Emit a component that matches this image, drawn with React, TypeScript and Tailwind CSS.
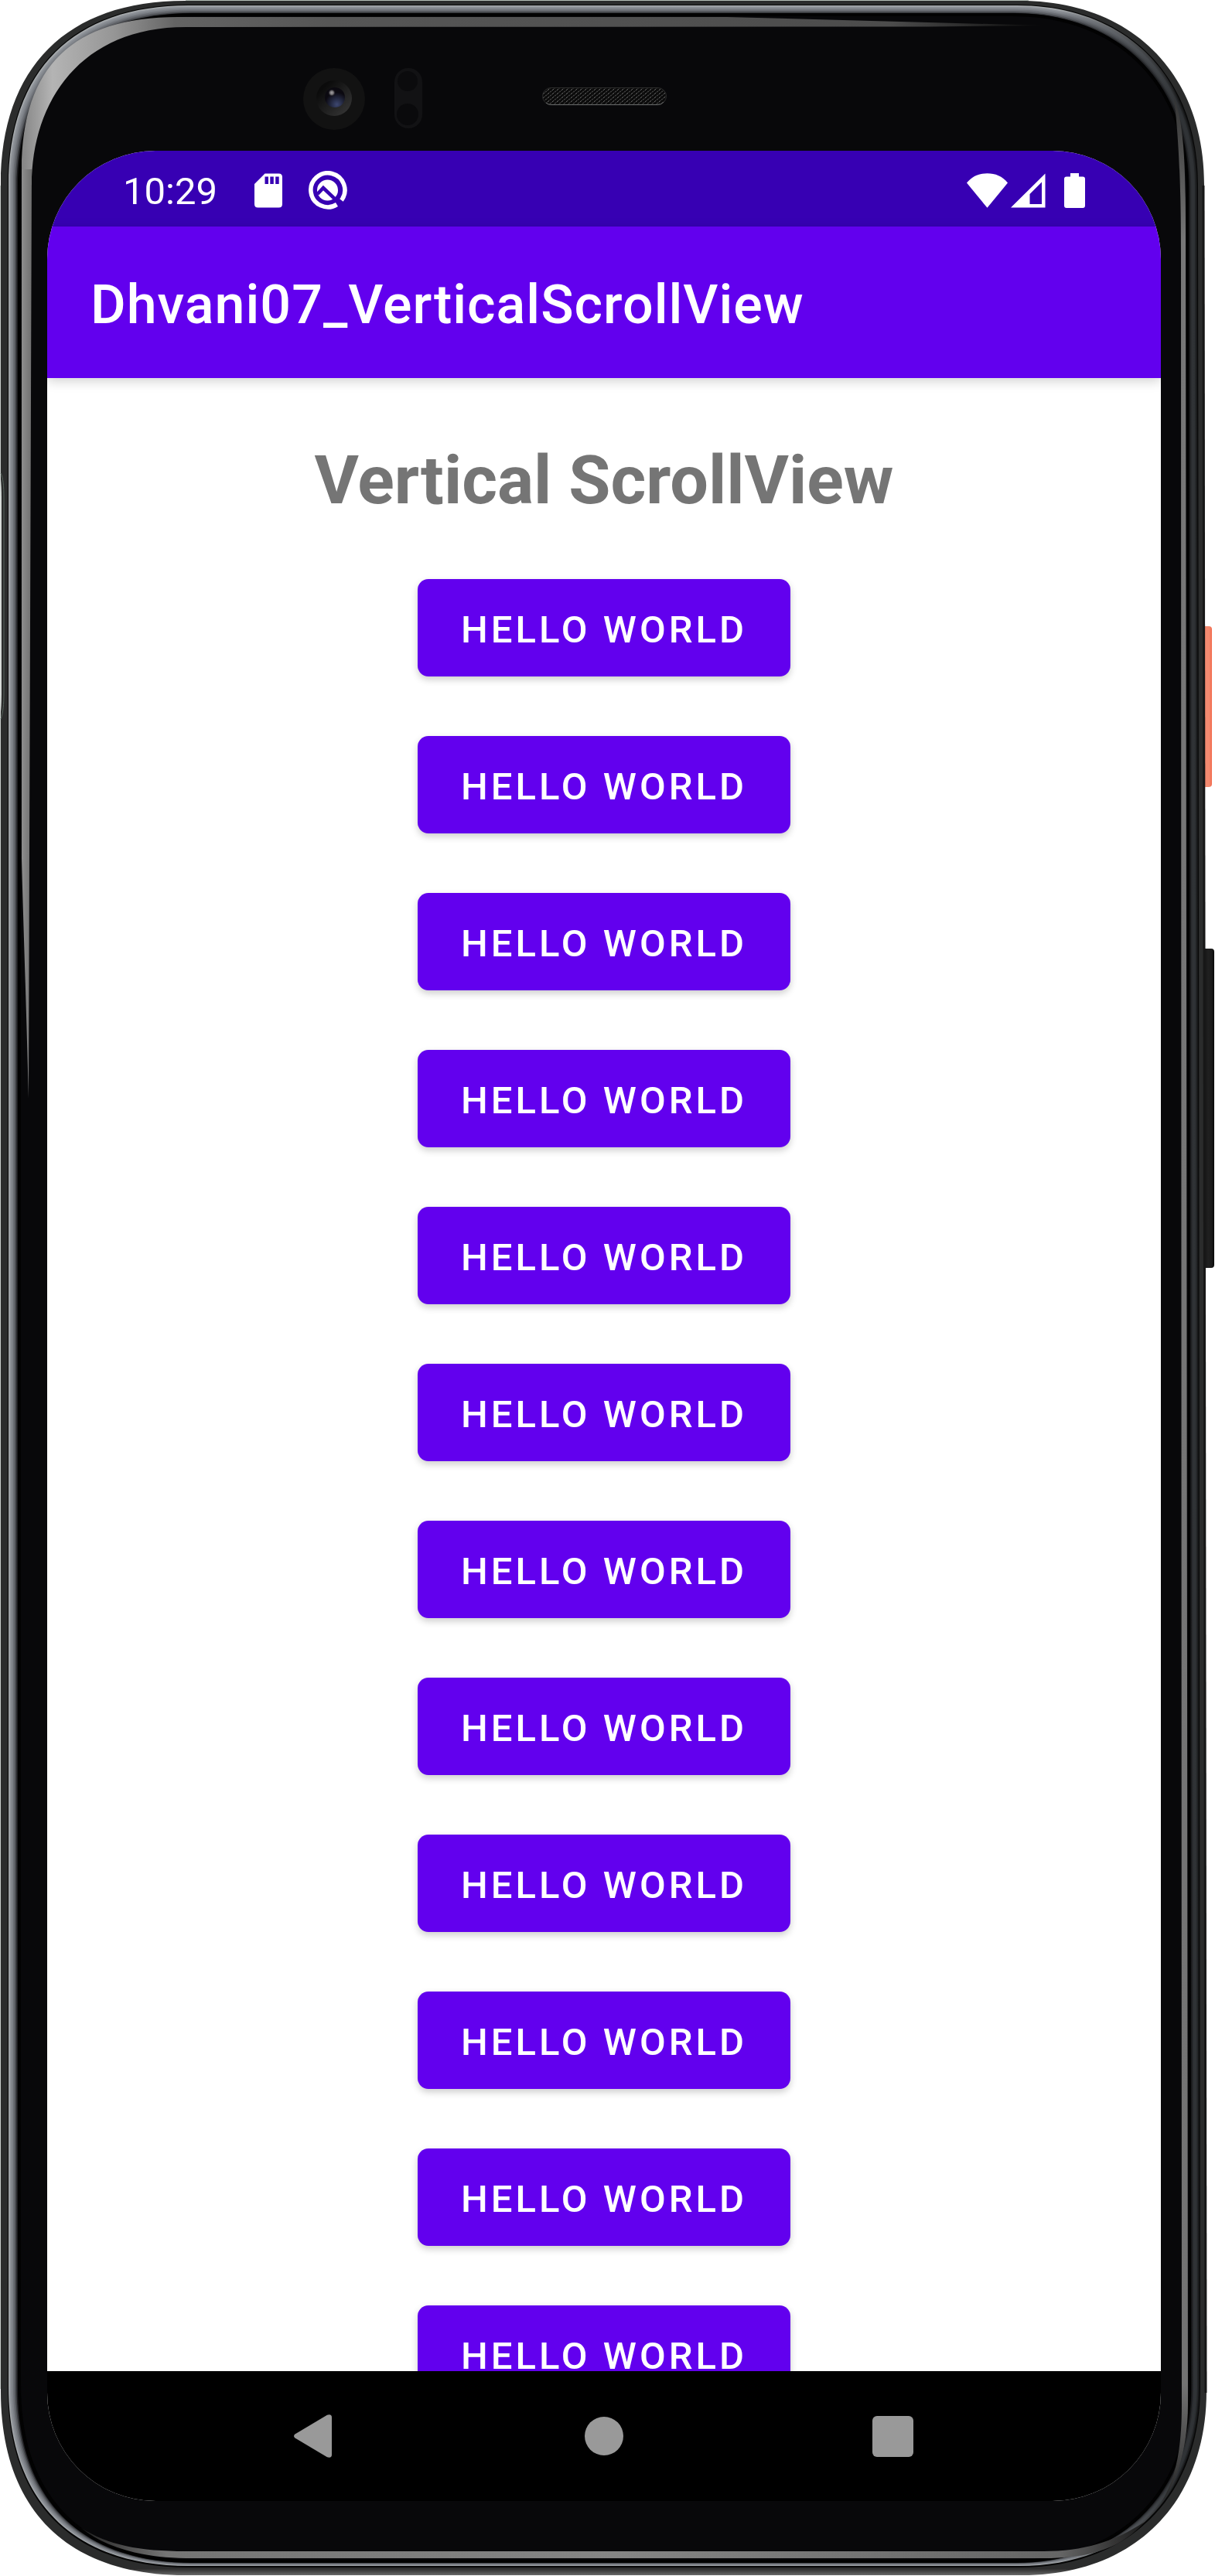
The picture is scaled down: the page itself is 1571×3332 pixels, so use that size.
import React from "react";

type Insets = { l: number; t: number; r: number; b: number };

// Outline of the phone body, shrunk by a different amount on each side.
function bodyPath({ l, t, r, b }: Insets): string {
  const x0 = 1 + l;
  const y0 = 1 + t;
  const x1 = 1557 - r;
  const x2 = 1560 - r;
  const y1 = 3331 - b;
  const R = 238 - Math.max(l, t) * 0.5;
  const h = R * 0.36;
  return [
    `M${x0} ${y0 + R}`,
    `C${x0} ${y0 + h} ${x0 + h} ${y0} ${x0 + R} ${y0}`,
    `L${x1 - R} ${y0}`,
    `C${x1 - h - 8} ${y0} ${x1} ${y0 + h + 8} ${x1} ${y0 + R}`,
    `L${x2} ${y1 - R}`,
    `C${x2} ${y1 - h - 8} ${x2 - h - 8} ${y1} ${x2 - R} ${y1}`,
    `L${x0 + R} ${y1}`,
    `C${x0 + h} ${y1} ${x0} ${y1 - h} ${x0} ${y1 - R}`,
    "Z",
  ].join(" ");
}

// Metal rim, from its bright outer line to its dark inner line.
const RIM: { left: string; right: string }[] = [
  { left: "#a3a7aa", right: "#161718" },
  { left: "#90949a", right: "#232527" },
  { left: "#868a90", right: "#2e3134" },
  { left: "#7b7f85", right: "#303336" },
  { left: "#6c6f75", right: "#303336" },
  { left: "#5a5d62", right: "#292b2e" },
  { left: "#3f4145", right: "#1a1b1d" },
  { left: "#1c1c1f", right: "#0c0c0e" },
];

function PhoneBody() {
  return (
    <svg
      className="absolute inset-0 h-full w-full"
      viewBox="0 0 1571 3332"
      preserveAspectRatio="none"
      aria-hidden="true"
    >
      <defs>
        <linearGradient id="outer" gradientUnits="userSpaceOnUse" x1="0" y1="3319" x2="0" y2="3331">
          <stop offset="0" stopColor="#2b2c2c" />
          <stop offset="0.3" stopColor="#2c2c2c" />
          <stop offset="1" stopColor="#6a6a6a" />
        </linearGradient>
        {RIM.map((c, i) => (
          <linearGradient key={i} id={`rim${i}`} gradientUnits="userSpaceOnUse" x1="0" y1="0" x2="1557" y2="0">
            <stop offset="0.88" stopColor={c.left} />
            <stop offset="0.98" stopColor={c.right} />
          </linearGradient>
        ))}
        <linearGradient id="shineLeft" gradientUnits="userSpaceOnUse" x1="28" y1="0" x2="41" y2="0">
          <stop offset="0" stopColor="#8e8e8e" />
          <stop offset="1" stopColor="#6f6f6f" />
        </linearGradient>
        <linearGradient id="shineTop" gradientUnits="userSpaceOnUse" x1="28" y1="0" x2="1350" y2="0">
          <stop offset="0" stopColor="#858585" />
          <stop offset="0.03" stopColor="#b4b4b4" />
          <stop offset="0.09" stopColor="#969696" />
          <stop offset="0.15" stopColor="#646464" />
          <stop offset="0.3" stopColor="#565656" />
          <stop offset="0.85" stopColor="#4c4c4c" />
          <stop offset="1" stopColor="#0a0a0a" />
        </linearGradient>
        <linearGradient id="shineRight" gradientUnits="userSpaceOnUse" x1="0" y1="125" x2="0" y2="3240">
          <stop offset="0" stopColor="#333333" />
          <stop offset="0.06" stopColor="#777777" />
          <stop offset="0.95" stopColor="#737373" />
          <stop offset="1" stopColor="#222222" />
        </linearGradient>
        <linearGradient id="shineBottom" gradientUnits="userSpaceOnUse" x1="105" y1="0" x2="1480" y2="0">
          <stop offset="0" stopColor="#222222" />
          <stop offset="0.08" stopColor="#757575" />
          <stop offset="0.5" stopColor="#858585" />
          <stop offset="0.92" stopColor="#666666" />
          <stop offset="1" stopColor="#1a1a1a" />
        </linearGradient>
        <linearGradient id="power" x1="0" y1="0" x2="1" y2="0">
          <stop offset="0" stopColor="#d9644a" />
          <stop offset="0.3" stopColor="#f48a70" />
          <stop offset="0.75" stopColor="#f48a70" />
          <stop offset="1" stopColor="#f2694b" />
        </linearGradient>
        <linearGradient id="volume" x1="0" y1="0" x2="1" y2="0">
          <stop offset="0" stopColor="#0c0c0c" />
          <stop offset="0.5" stopColor="#202020" />
          <stop offset="0.8" stopColor="#1a1a1a" />
          <stop offset="1" stopColor="#060606" />
        </linearGradient>
        <linearGradient id="cameraRing" x1="0" y1="0" x2="1" y2="1">
          <stop offset="0.2" stopColor="#0b0b0b" />
          <stop offset="1" stopColor="#3a3a3a" />
        </linearGradient>
        <radialGradient id="cameraLens" cx="0.6" cy="0.85" r="0.6">
          <stop offset="0" stopColor="#3e4870" />
          <stop offset="0.5" stopColor="#232840" />
          <stop offset="1" stopColor="#0b0910" />
        </radialGradient>
        <radialGradient id="cameraGlint">
          <stop offset="0" stopColor="#a8a6a8" />
          <stop offset="0.5" stopColor="#6b696c" />
          <stop offset="1" stopColor="#0b0910" stopOpacity="0" />
        </radialGradient>
        <pattern id="mesh" width="6" height="5" patternUnits="userSpaceOnUse">
          <rect width="6" height="5" fill="#0c0c0c" />
          <path d="M0 2L2 0M3 4.500L5 2.500" stroke="#6c6c6c" strokeWidth="1" />
        </pattern>
      </defs>

      <rect x="1553" y="810" width="14" height="208" rx="4" fill="url(#power)" />
      <rect x="1554" y="1227" width="16" height="413" rx="4" fill="url(#volume)" />

      <path d={bodyPath({ l: 0, t: 0, r: 0, b: 0 })} fill="url(#outer)" />
      <path d="M240 0.500H1330" stroke="#b6c0b8" />
      <path d="M0.500 240V3090" stroke="#c9cecb" />
      <path d="M0 612C1 618 2 628 2 645V895C2 912 1 922 0 930Z" fill="#d5dad7" />
      <path d="M1 612C4 618 5 628 5 645V895C5 912 4 922 1 930" fill="none" stroke="#56635c" strokeWidth="1" />
      <path d="M1556 240L1559 3095" stroke="#171717" strokeWidth="3" />
      <path d={bodyPath({ l: 9, t: 5, r: 8, b: 10 })} fill="#060606" />
      {RIM.map((_, i) => (
        <path
          key={i}
          d={bodyPath({ l: 10 + i * 1.5, t: 6 + i * 1.4, r: 9 + i * 1.5, b: 12 + i * 0.6 })}
          fill={`url(#rim${i})`}
        />
      ))}
      <path d={bodyPath({ l: 22, t: 16, r: 20, b: 16 })} fill="#020202" />
      <path d={bodyPath({ l: 26, t: 20, r: 23, b: 20 })} fill="#08080a" />

      <path
        d="M28 220C28 85 95 22 230 22H940L1200 29L1350 33L1200 34.500L240 35C105 35 41 130 41 240Z"
        fill="url(#shineTop)"
      />
      <path d="M28 219H41L38 1100L37 1420C34 1300 30 1190 28 1110Z" fill="url(#shineLeft)" />
      <path
        d="M1518 125C1530 160 1533 200 1533 300L1536 3110C1536 3165 1522 3210 1502 3237C1520 3205 1528 3170 1528 3110L1527 330C1527 230 1524 180 1518 125Z"
        fill="url(#shineRight)"
      />
      <path
        d="M105 3270C140 3292 180 3300 240 3300H1350C1400 3300 1440 3288 1480 3262C1450 3296 1410 3309 1350 3309H240C180 3308 135 3294 105 3270Z"
        fill="url(#shineBottom)"
      />

      <circle cx="432" cy="128" r="40" fill="#121212" />
      <circle cx="432" cy="127" r="23" fill="url(#cameraRing)" />
      <circle cx="433" cy="126" r="13" fill="url(#cameraLens)" />
      <circle cx="429" cy="120" r="5" fill="url(#cameraGlint)" />

      <rect x="510" y="88" width="36" height="78" rx="18" fill="#121214" />
      <circle cx="527" cy="105" r="13" fill="#0b0b0d" />
      <circle cx="527" cy="148" r="14" fill="#0a0a0c" />

      <rect x="701.500" y="113.500" width="160" height="22" rx="11" fill="url(#mesh)" stroke="#2a2a2a" />
      <path d="M706 133Q709 135.500 713 135.500H850Q855 135.500 858 132" fill="none" stroke="#6a6c6c" />
    </svg>
  );
}

function SdCardIcon() {
  return (
    <svg className="h-[45px] w-9" viewBox="0 0 36 45" fill="#ffffff" role="img" aria-label="SD card">
      <path
        fillRule="evenodd"
        d="M13.500 0.500H31.500Q36 0.500 36 5V40Q36 44.500 31.500 44.500H4.500Q0 44.500 0 40V14Z M13.500 4.500V14H18V4.500Z M20.300 4.500V14H24.800V4.500Z M27.200 4.500V14H31.700V4.500Z"
      />
    </svg>
  );
}

function AndroidQIcon() {
  return (
    <svg className="h-[50px] w-[50px]" viewBox="0 0 50 50" role="img" aria-label="Android">
      <circle cx="24.500" cy="25" r="13.500" fill="#ffffff" />
      <path d="M11.500 30L19 22L41 43" fill="none" stroke="#3700b3" strokeWidth="4.600" />
      <path d="M42.500 38A22 22 0 1 0 36.500 43.500" fill="none" stroke="#ffffff" strokeWidth="5.600" />
    </svg>
  );
}

function WifiIcon() {
  return (
    <svg className="h-[45px] w-[53px]" viewBox="0 0 53 45" fill="#ffffff" role="img" aria-label="Wi-Fi">
      <path d="M0 12.500C7 4 16 0.300 26.500 0.300S46 4 53 12.500L26.500 44.800Z" />
    </svg>
  );
}

function SignalIcon() {
  return (
    <svg className="h-[45px] w-[45px]" viewBox="0 0 45 45" fill="#ffffff" role="img" aria-label="Mobile signal">
      <path fillRule="evenodd" d="M44.500 0.500V44.500H0ZM40 11.500L24.500 27V40H40Z" />
    </svg>
  );
}

function BatteryIcon() {
  return (
    <svg className="h-[45px] w-[27px]" viewBox="0 0 27 45" fill="#ffffff" role="img" aria-label="Battery full">
      <path d="M8 0H19V4.500H24Q27 4.500 27 7.500V42Q27 45 24 45H3Q0 45 0 42V7.500Q0 4.500 3 4.500H8Z" />
    </svg>
  );
}

function StatusBar() {
  return (
    <div className="flex h-[98px] shrink-0 items-center justify-between bg-[#3700b3] px-[98px] pt-1">
      <div className="flex items-center">
        <span className="pt-0.5 text-[49px] leading-none">10:29</span>
        <div className="ml-12 flex items-center gap-[34px]">
          <SdCardIcon />
          <AndroidQIcon />
        </div>
      </div>
      <div className="flex items-center gap-1">
        <WifiIcon />
        <SignalIcon />
        <div className="ml-5 flex">
          <BatteryIcon />
        </div>
      </div>
    </div>
  );
}

function NavigationBar() {
  return (
    <nav className="grid h-[168px] shrink-0 grid-cols-3 bg-black px-40">
      <button type="button" aria-label="Back" className="flex items-center justify-center">
        <svg className="h-14 w-14" viewBox="0 0 56 56" fill="#999999" aria-hidden="true">
          <path d="M1.500 25.500L43 0.700Q49 -1 49 4V52Q49 57 43 55.300L1.500 30.500Q-1.500 28 1.500 25.500Z" />
        </svg>
      </button>
      <button type="button" aria-label="Home" className="flex items-center justify-center">
        <span className="h-[50px] w-[50px] rounded-full bg-[#999999]" />
      </button>
      <button type="button" aria-label="Recent apps" className="flex items-center justify-center">
        <span className="h-[53px] w-[53px] rounded-md bg-[#999999]" />
      </button>
    </nav>
  );
}

const ITEMS = Array.from({ length: 12 }, () => "HELLO WORLD");

export default function App() {
  return (
    <div className="relative flex h-screen w-full bg-white pt-[195px] pr-[70px] pb-[97px] pl-[61px] font-['Roboto',sans-serif] text-white">
      <PhoneBody />
      <div className="relative flex min-w-0 flex-1 flex-col overflow-hidden rounded-[140px] bg-white">
        <StatusBar />
        <header className="relative z-10 flex h-[196px] shrink-0 items-center bg-[#6200ee] px-14 pt-1.5 shadow-[0_4px_14px_rgba(0,0,0,0.18)]">
          <h1 className="text-[70px] leading-none font-medium tracking-[1px]">Dhvani07_VerticalScrollView</h1>
        </header>
        <main className="flex min-h-0 flex-1 flex-col items-center gap-[77px] overflow-y-auto pt-20 [scrollbar-width:none]">
          <h2 className="shrink-0 text-[88px] leading-[103px] font-bold text-[#757575]">Vertical ScrollView</h2>
          {ITEMS.map((label, i) => (
            <button
              key={i}
              type="button"
              className="h-[126px] shrink-0 rounded-[14px] bg-[#6200ee] px-14 pt-1 text-[49px] leading-none font-medium tracking-[4px] shadow-[0_4px_10px_rgba(0,0,0,0.2)]"
            >
              {label}
            </button>
          ))}
        </main>
        <NavigationBar />
      </div>
    </div>
  );
}
